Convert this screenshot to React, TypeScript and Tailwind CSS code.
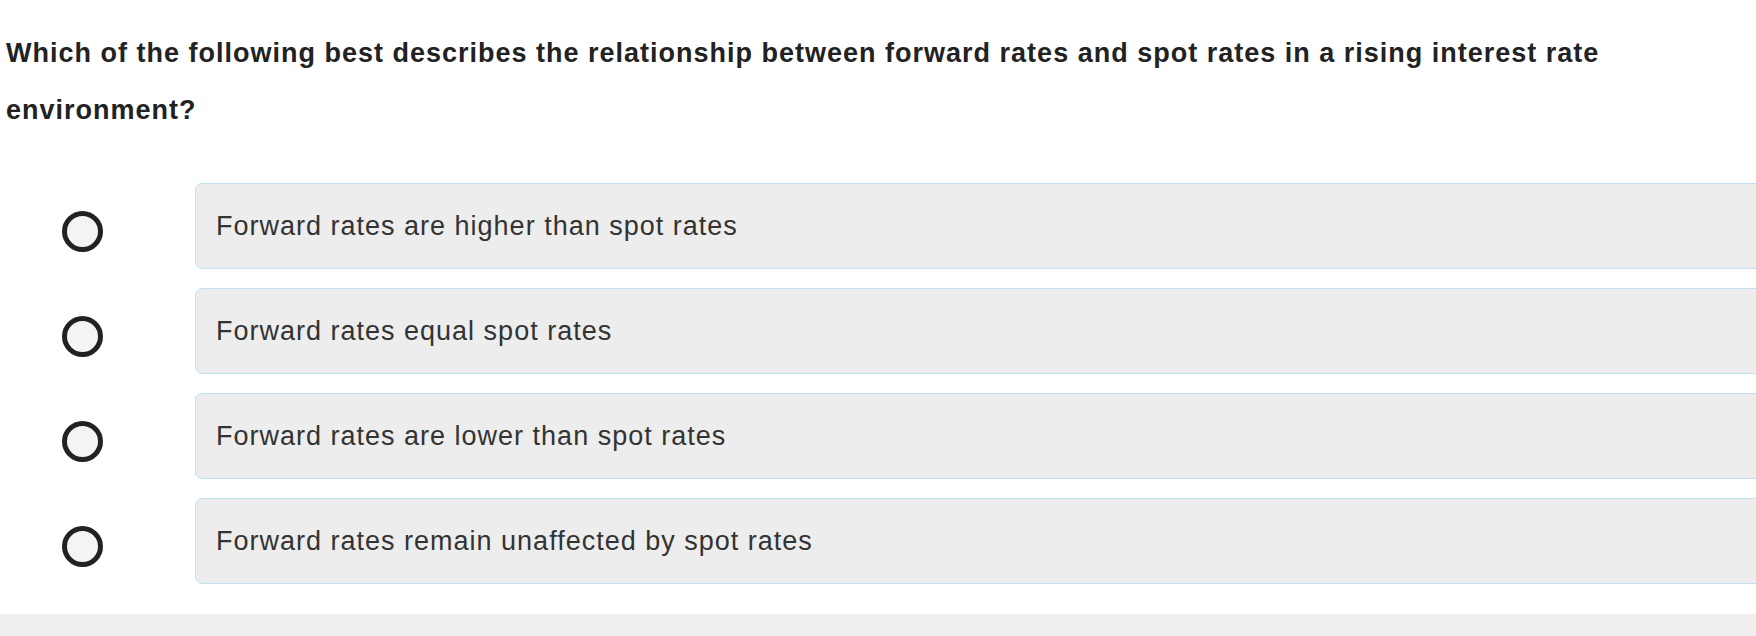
import React from "react";

const options = [
  "Forward rates are higher than spot rates",
  "Forward rates equal spot rates",
  "Forward rates are lower than spot rates",
  "Forward rates remain unaffected by spot rates",
];

export default function App() {
  return (
    <div
      className="w-[1756px] h-[636px] overflow-hidden bg-white flex flex-col"
      style={{ fontFamily: '"Liberation Sans", Arial, Helvetica, sans-serif' }}
    >
      <div className="pl-[6px] pt-[25px] pr-[100px] text-[27px] leading-[57px] font-bold text-[#222] tracking-[1px]">
        Which of the following best describes the relationship between forward rates and spot rates in a rising interest rate environment?
      </div>
      <div className="mt-[44px] flex flex-col gap-[19px]">
        {options.map((o) => (
          <div key={o} className="flex items-center">
            <div className="w-[195px] flex justify-center pr-[30px] pt-[10px]">
              <span className="block w-[41px] h-[41px] rounded-full border-[5px] border-[#222] bg-[#f4f4f4]" />
            </div>
            <div className="flex-1 mr-[-20px] h-[86px] rounded-[7px] border-[1.5px] border-[#bfe4f0] bg-[#ededed] flex items-center pl-[20px] text-[27px] text-[#333] tracking-[1px]">
              {o}
            </div>
          </div>
        ))}
      </div>
      <div className="mt-[30px] flex-1 bg-[#efedee]" />
    </div>
  );
}
